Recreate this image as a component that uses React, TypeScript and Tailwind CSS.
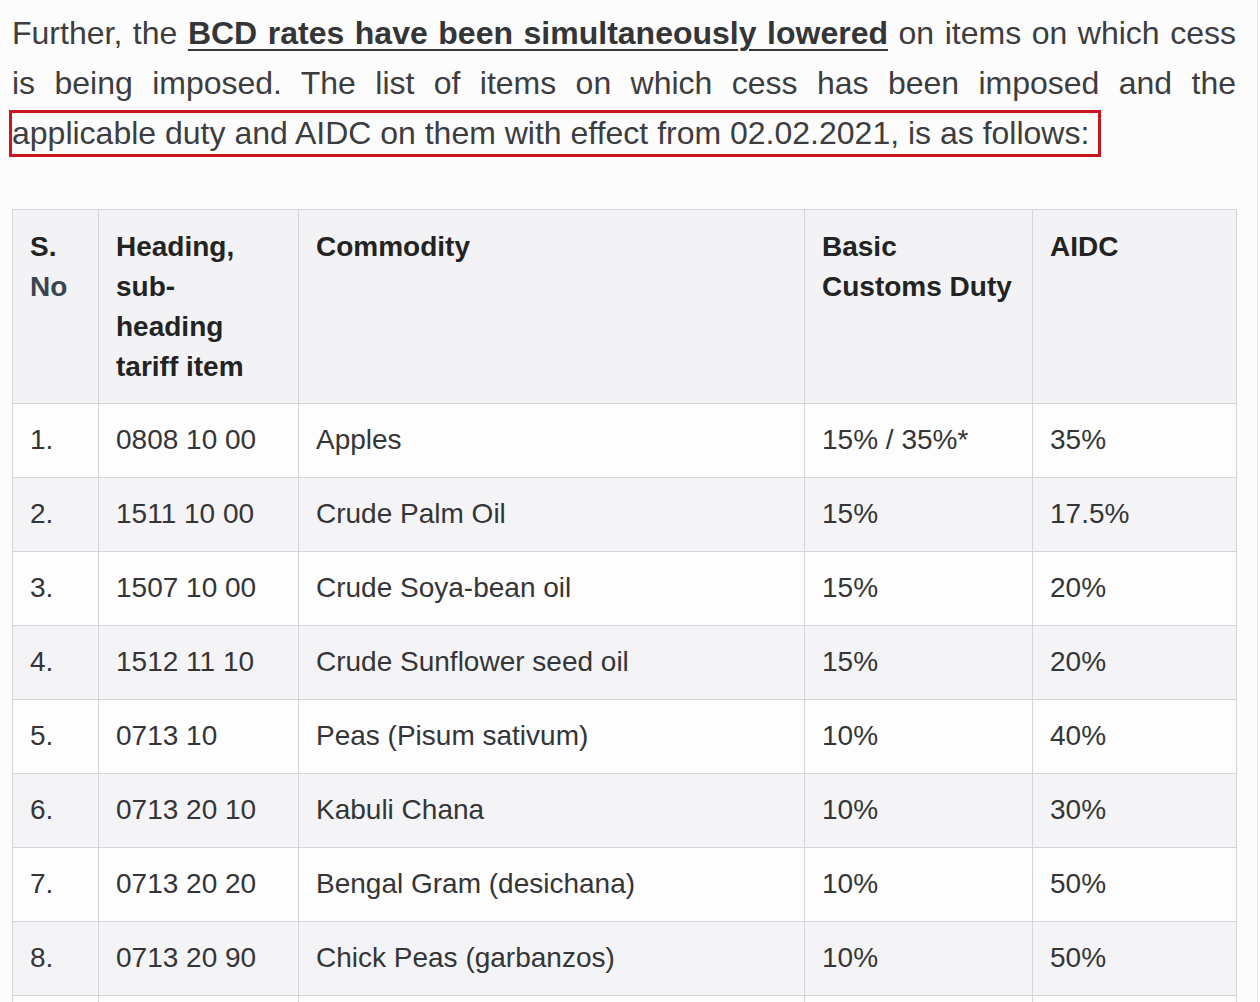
import React from "react";

const rows: [string, string, string, string, string][] = [
  ["1.", "0808 10 00", "Apples", "15% / 35%*", "35%"],
  ["2.", "1511 10 00", "Crude Palm Oil", "15%", "17.5%"],
  ["3.", "1507 10 00", "Crude Soya-bean oil", "15%", "20%"],
  ["4.", "1512 11 10", "Crude Sunflower seed oil", "15%", "20%"],
  ["5.", "0713 10", "Peas (Pisum sativum)", "10%", "40%"],
  ["6.", "0713 20 10", "Kabuli Chana", "10%", "30%"],
  ["7.", "0713 20 20", "Bengal Gram (desichana)", "10%", "50%"],
  ["8.", "0713 20 90", "Chick Peas (garbanzos)", "10%", "50%"],
  ["", "", "", "", ""],
];

export default function App() {
  return (
    <div
      className="w-[1258px] min-h-[1002px] bg-[#fcfcfd] border-r border-[#e6e6e9] pl-[12px] pt-[8px]"
      style={{ fontFamily: '"Liberation Sans", Arial, sans-serif' }}
    >
      <div className="w-[1224px] text-[32px] leading-[50px] text-[#3d3d3f] text-justify [text-align-last:justify]">
        Further, the{" "}
        <span className="font-bold underline decoration-[2px] underline-offset-[5px] text-[#343537]">
          BCD rates have been simultaneously lowered
        </span>{" "}
        on items on which cess
        <br />
        is being imposed. The list of items on which cess has been imposed and the
      </div>
      <div className="mt-[2px] ml-[-3px] w-[1092px] border-[3px] border-[#c9161e] text-[32px] leading-[41px] text-[#3d3d3f] whitespace-nowrap">
        applicable duty and AIDC on them with effect from 02.02.2021, is as follows:
      </div>
      <table className="mt-[52px] w-[1224px] table-fixed border-collapse text-[28px] leading-[40px]">
        <colgroup>
          <col className="w-[86px]" />
          <col className="w-[200px]" />
          <col className="w-[506px]" />
          <col className="w-[228px]" />
          <col className="w-[204px]" />
        </colgroup>
        <thead>
          <tr className="bg-[#f3f3f5]">
            <th className="border border-[#d5d5d9] px-[17px] pt-[17px] pb-[16px] align-top text-left font-bold text-[#232323]">
              S.
              <br />
              <span className="text-[#3a4552]">No</span>
            </th>
            <th className="border border-[#d5d5d9] px-[17px] pt-[17px] pb-[16px] align-top text-left font-bold text-[#232323]">
              Heading,
              <br />
              sub-
              <br />
              heading
              <br />
              tariff item
            </th>
            <th className="border border-[#d5d5d9] px-[17px] pt-[17px] pb-[16px] align-top text-left font-bold text-[#232323]">
              Commodity
            </th>
            <th className="border border-[#d5d5d9] px-[17px] pt-[17px] pb-[16px] align-top text-left font-bold text-[#232323]">
              Basic
              <br />
              Customs Duty
            </th>
            <th className="border border-[#d5d5d9] px-[17px] pt-[17px] pb-[16px] align-top text-left font-bold text-[#232323]">
              AIDC
            </th>
          </tr>
        </thead>
        <tbody>
          {rows.map((r, i) => (
            <tr key={i} className={i % 2 === 0 ? "bg-[#fdfdfe]" : "bg-[#f4f4f6]"}>
              {r.map((c, j) => (
                <td
                  key={j}
                  className="border border-[#d5d5d9] px-[17px] pt-[16px] pb-[17px] h-[73px] align-middle text-left text-[#353537] whitespace-nowrap"
                >
                  {c}
                </td>
              ))}
            </tr>
          ))}
        </tbody>
      </table>
    </div>
  );
}
